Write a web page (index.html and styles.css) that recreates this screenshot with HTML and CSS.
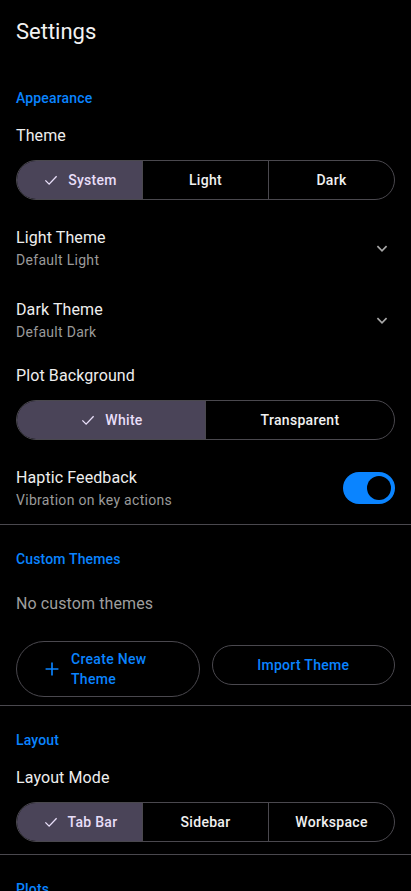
FILE: index.html
```html
<!DOCTYPE html>
<html lang="en">
<head>
    <meta charset="UTF-8">
    <meta name="viewport" content="width=device-width, initial-scale=1.0">
    <title>Settings</title>
    <link rel="stylesheet" href="styles.css">
</head>
<body>
    <header class="top-bar">
        <h1>Settings</h1>
    </header>

    <section class="section">
        <h2 class="section-title">Appearance</h2>
        <div class="label">Theme</div>
        <div class="segmented">
            <button class="seg selected"><svg class="check" viewBox="0 0 24 24"><path d="M4.5 12.5l5 5L19.5 7"/></svg>System</button>
            <button class="seg">Light</button>
            <button class="seg">Dark</button>
        </div>

        <div class="row">
            <div class="row-text">
                <div class="row-title">Light Theme</div>
                <div class="row-sub">Default Light</div>
            </div>
            <svg class="chevron" viewBox="0 0 24 24"><path d="M7 10l5 5 5-5"/></svg>
        </div>
        <div class="row">
            <div class="row-text">
                <div class="row-title">Dark Theme</div>
                <div class="row-sub">Default Dark</div>
            </div>
            <svg class="chevron" viewBox="0 0 24 24"><path d="M7 10l5 5 5-5"/></svg>
        </div>

        <div class="label label-tight">Plot Background</div>
        <div class="segmented">
            <button class="seg selected"><svg class="check" viewBox="0 0 24 24"><path d="M4.5 12.5l5 5L19.5 7"/></svg>White</button>
            <button class="seg">Transparent</button>
        </div>

        <div class="row">
            <div class="row-text">
                <div class="row-title">Haptic Feedback</div>
                <div class="row-sub">Vibration on key actions</div>
            </div>
            <div class="switch on"><span class="thumb"></span></div>
        </div>
    </section>

    <section class="section section-bordered">
        <h2 class="section-title">Custom Themes</h2>
        <p class="empty">No custom themes</p>
        <div class="actions">
            <button class="outline-btn with-icon">
                <svg class="plus" viewBox="0 0 24 24"><path d="M12 5v14M5 12h14"/></svg>
                <span>Create New Theme</span>
            </button>
            <button class="outline-btn import">Import Theme</button>
        </div>
    </section>

    <section class="section section-bordered section-layout">
        <h2 class="section-title">Layout</h2>
        <div class="label">Layout Mode</div>
        <div class="segmented">
            <button class="seg selected"><svg class="check" viewBox="0 0 24 24"><path d="M4.5 12.5l5 5L19.5 7"/></svg>Tab Bar</button>
            <button class="seg">Sidebar</button>
            <button class="seg">Workspace</button>
        </div>
    </section>

    <section class="section section-bordered">
        <h2 class="section-title">Plots</h2>
    </section>
</body>
</html>
```

FILE: styles.css
```css
body {
    font-family: Roboto, "Noto Sans", sans-serif;
    background-color: #000;
    color: #e6e1e5;
    margin: 0;
    height: 891px;
    overflow: hidden;
}

.top-bar {
    height: 64px;
    display: flex;
    align-items: center;
    padding: 0 16px;
}

.top-bar h1 {
    margin: 0;
    font-size: 22px;
    font-weight: 400;
    line-height: 28px;
    color: #f2f2f2;
}

.section {
    padding: 24px 16px 0;
}

.section-bordered {
    border-top: 1px solid #4a484e;
}

.section-layout {
    padding-bottom: 12px;
}

.section-title {
    margin: 0;
    font-size: 14px;
    font-weight: 500;
    line-height: 20px;
    color: #0a84ff;
    letter-spacing: 0.15px;
}

.label {
    font-size: 16px;
    line-height: 24px;
    margin-top: 16px;
    margin-bottom: 12px;
    color: #eeeeee;
    letter-spacing: 0.1px;
}

.label-tight {
    margin-top: 8px;
}

.segmented {
    display: flex;
    height: 40px;
    border: 1px solid #4a484e;
    border-radius: 20px;
    overflow: hidden;
    box-sizing: border-box;
}

.seg {
    flex: 1 1 0;
    min-width: 0;
    display: flex;
    align-items: center;
    justify-content: center;
    gap: 8px;
    background: transparent;
    border: none;
    border-left: 1px solid #4a484e;
    color: #f0f0f0;
    font-family: inherit;
    font-size: 14px;
    font-weight: 500;
    letter-spacing: 0.3px;
    padding: 0;
}

.seg:first-child {
    border-left: none;
}

.seg.selected {
    background-color: #4a4458;
    color: #e8def8;
}

.check {
    width: 18px;
    height: 18px;
    fill: none;
    stroke: #e8def8;
    stroke-width: 1.8;
}

.row {
    height: 72px;
    display: flex;
    align-items: center;
    justify-content: space-between;
}

.segmented + .row {
    margin-top: 12px;
}

.row-title {
    font-size: 16px;
    line-height: 24px;
    color: #eeeeee;
    letter-spacing: 0.1px;
}

.row-sub {
    font-size: 14px;
    line-height: 20px;
    color: #9a9a9a;
    letter-spacing: 0.3px;
}

.chevron {
    width: 22px;
    height: 22px;
    margin-right: 2px;
    fill: none;
    stroke: #a8a8a8;
    stroke-width: 1.8;
}

.switch {
    width: 52px;
    height: 32px;
    border-radius: 16px;
    background-color: #0a84ff;
    display: flex;
    align-items: center;
    justify-content: flex-end;
    padding: 0 4px;
    box-sizing: border-box;
}

.thumb {
    width: 24px;
    height: 24px;
    border-radius: 50%;
    background-color: #000;
}

.empty {
    margin: 23px 0 0;
    font-size: 16px;
    line-height: 24px;
    color: #9e9e9e;
    letter-spacing: 0.1px;
}

.actions {
    display: grid;
    grid-template-columns: repeat(2, minmax(0, 1fr));
    align-items: start;
    gap: 12px;
    margin-top: 25px;
    padding-bottom: 8px;
}

.outline-btn {
    min-height: 40px;
    display: flex;
    align-items: center;
    justify-content: center;
    gap: 8px;
    padding: 8px 24px;
    background: transparent;
    border: 1px solid #4a484e;
    border-radius: 28px;
    color: #0a84ff;
    font-family: inherit;
    font-size: 14px;
    font-weight: 500;
    line-height: 20px;
    letter-spacing: 0.3px;
    text-align: left;
    box-sizing: border-box;
}

.import {
    margin-top: 4px;
}

.with-icon {
    justify-content: flex-start;
    padding: 7px 32px 7px 24px;
}

.plus {
    width: 22px;
    height: 22px;
    flex-shrink: 0;
    fill: none;
    stroke: #0a84ff;
    stroke-width: 1.8;
}
```
